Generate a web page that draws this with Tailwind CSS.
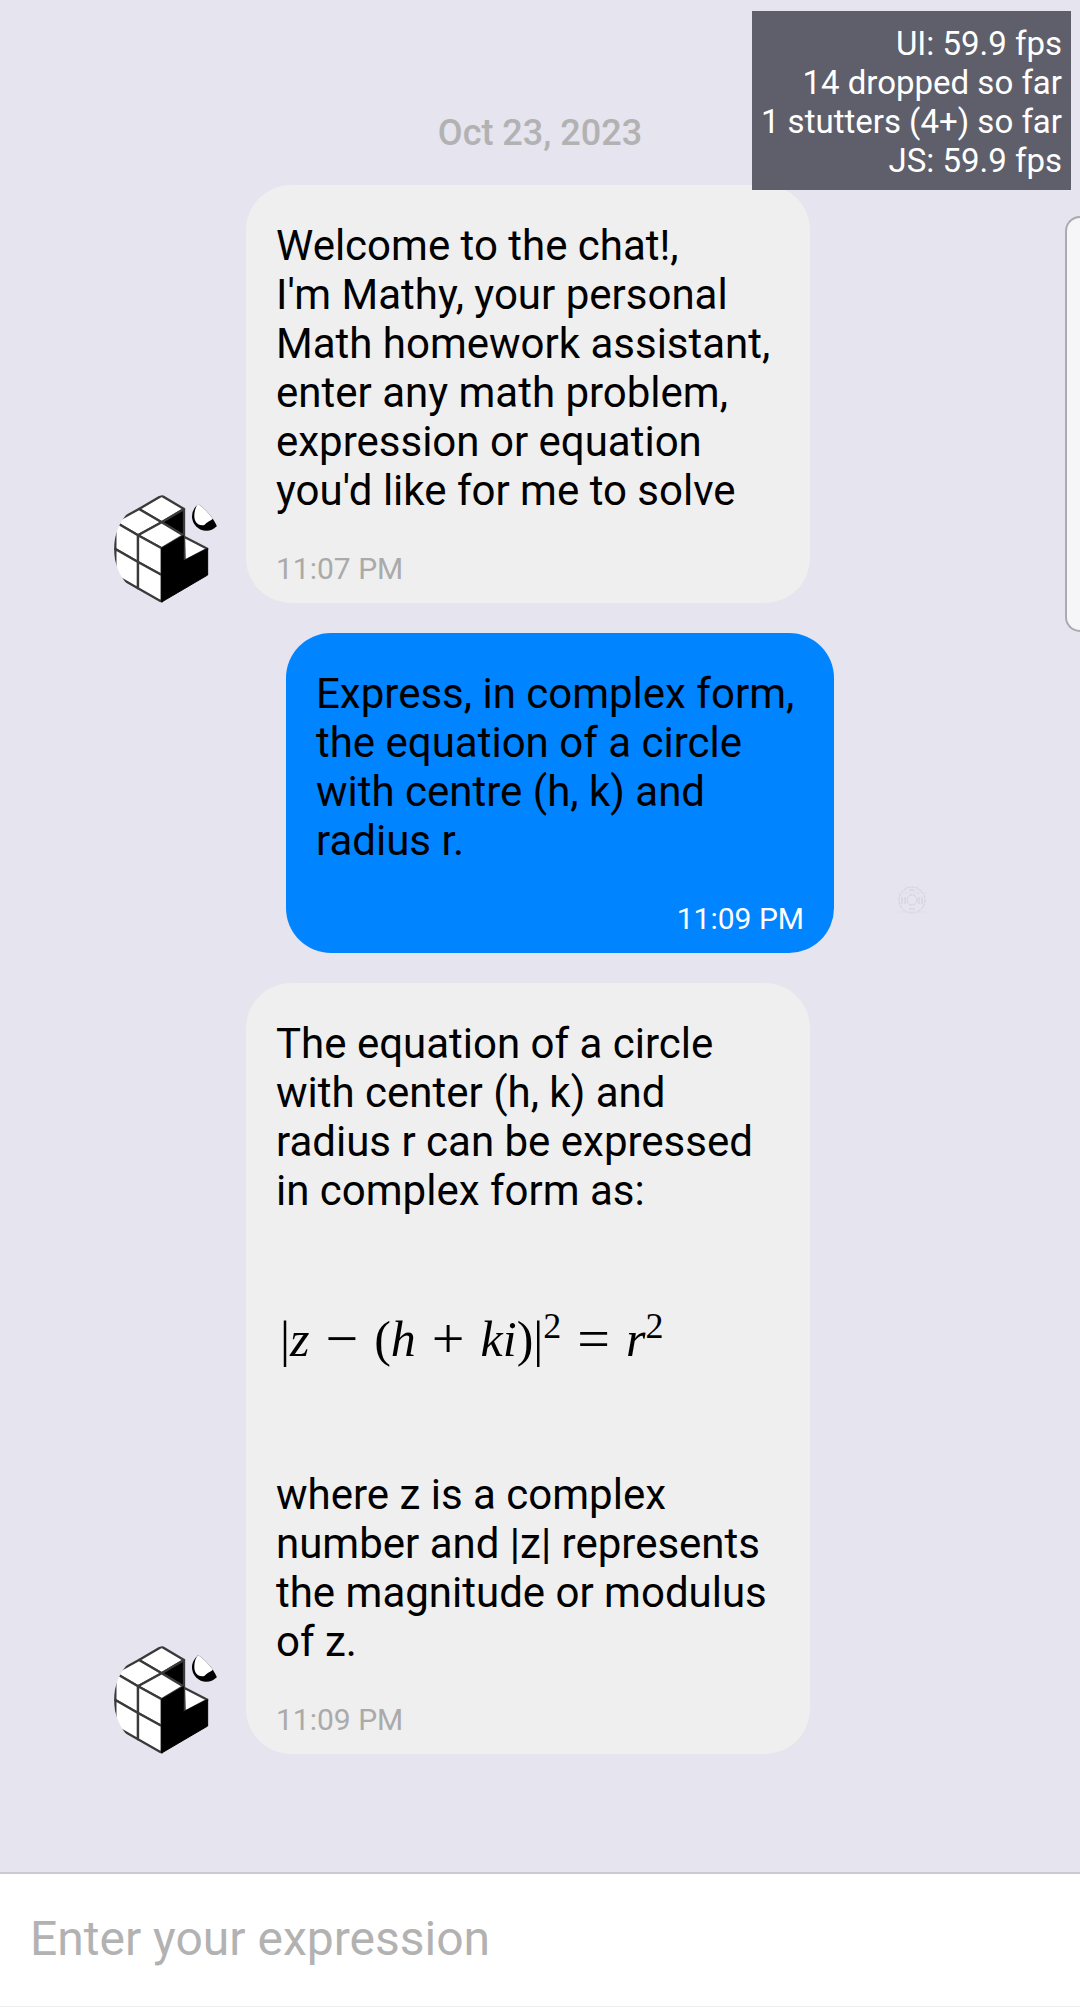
<!DOCTYPE html>
<html lang="en">
<head>
<meta charset="utf-8">
<meta name="viewport" content="width=device-width, initial-scale=1">
<title>Mathy chat</title>
<script src="https://cdn.jsdelivr.net/npm/@tailwindcss/browser@4"></script>
</head>
<body class="relative flex min-h-screen flex-col overflow-x-hidden bg-[#e5e4ef] font-['Roboto',sans-serif] text-black">

<svg class="absolute size-0" aria-hidden="true">
  <defs>
    <clipPath id="round"><circle cx="204" cy="207" r="162"/></clipPath>
    <symbol id="mathy" viewBox="42 45 324 324">
      <g clip-path="url(#round)" stroke="#3a3a3a" stroke-width="7" stroke-linejoin="round">
        <path fill="#fff" d="M185 47 252 87 185 127 117 87Z"/>
        <path fill="#fff" d="M117 87 185 127 114 166 46 126Z"/>
        <path fill="#000" d="M252 87V168L185 127Z"/>
        <path fill="#fff" d="M185 127 250 166 185 205 114 166Z"/>
        <path fill="#fff" d="M46 126 114 166V246L46 207Z"/>
        <path fill="#fff" d="M114 166 185 205V285L114 246Z"/>
        <path fill="#fff" d="M46 207 114 246V325L46 286Z"/>
        <path fill="#fff" d="M114 246 185 285V365L114 325Z"/>
        <path fill="#fff" d="M252 170 322 206 254 242Z"/>
        <path fill="#000" stroke="#000" stroke-width="3" d="M185 205 250 167V243L323 206V285L185 366Z"/>
        <circle cx="319" cy="109" r="43" fill="#000" stroke="none"/>
        <path fill="#fff" stroke="none" d="M283 105C284 82 294 70 306 64L362 90C350 118 330 118 313 135C292 139 282 124 283 105Z"/>
      </g>
    </symbol>
  </defs>
</svg>

<main class="flex flex-1 flex-col px-[114px] pt-28 pb-24">
  <h1 class="mb-[31px] text-center text-[36px]/[42px] font-medium text-[#b2b2b2]"><time datetime="2023-10-23">Oct 23, 2023</time></h1>

  <div class="flex flex-col gap-[30px]">
    <article class="flex items-end gap-6">
      <svg class="size-[108px] shrink-0" role="img" aria-label="Mathy"><use href="#mathy"/></svg>
      <div class="flex w-full max-w-[564px] flex-col gap-9 rounded-[45px] bg-[#efefef] px-[30px] pt-9 pb-[17px]">
        <p class="text-[42px]/[49px]">Welcome to the chat!,<br>I'm Mathy, your personal Math homework assistant, enter any math problem, expression or equation you'd like for me to solve</p>
        <time class="text-[30px]/[35px] text-[#aaaaaa]">11:07 PM</time>
      </div>
    </article>

    <article class="flex items-end justify-end gap-6">
      <div class="flex w-full max-w-[548px] flex-col gap-9 rounded-[45px] bg-[#0084ff] px-[30px] pt-9 pb-[17px]">
        <p class="text-[42px]/[49px]">Express, in complex form, the equation of a circle with centre (h, k) and radius r.</p>
        <time class="text-right text-[30px]/[35px] text-white">11:09 PM</time>
      </div>
      <svg class="size-[108px] shrink-0" viewBox="0 0 108 108" fill="none" stroke="#d0d0da" role="img" aria-label="You">
        <circle cx="54" cy="55" r="13" stroke-dasharray="3 1"/>
        <path d="M44 52V59M47 52V59M61 52V59M64 52V59M51 45H57M51 64H57"/>
        <circle cx="54" cy="55" r="5" stroke-dasharray="3 1"/>
        <path stroke="#dfdee9" d="M39 48H69M39 67H69M48 39V50M60 39V50"/>
      </svg>
    </article>

    <article class="flex items-end gap-6">
      <svg class="size-[108px] shrink-0" role="img" aria-label="Mathy"><use href="#mathy"/></svg>
      <div class="flex w-full max-w-[564px] flex-col gap-9 rounded-[45px] bg-[#efefef] px-[30px] pt-9 pb-[17px]">
        <div class="text-[42px]/[49px]">
          <p>The equation of a circle with center (h, k) and radius r can be expressed in complex form as:</p>
          <p class="flex h-[255px] items-center gap-4 pb-2 pl-1 font-['Liberation_Serif',serif] text-[50px]/[60px] whitespace-nowrap">
            <span>|<i>z</i></span><span class="text-[58px]/[60px]">−</span><span>(<i>h</i></span><span class="text-[58px]/[60px]">+</span><span><i>ki</i>)|<sup class="text-[36px]/[0px]">2</sup></span><span class="text-[58px]/[60px]">=</span><span><i>r</i><sup class="text-[36px]/[0px]">2</sup></span>
          </p>
          <p>where z is a complex number and |z| represents the magnitude or modulus of z.</p>
        </div>
        <time class="text-[30px]/[35px] text-[#aaaaaa]">11:09 PM</time>
      </div>
    </article>
  </div>
</main>

<footer class="border-t-2 border-b border-t-[#cbcad3] border-b-[#eeeeee] bg-white px-[30px]">
  <input type="text" aria-label="Expression" placeholder="Enter your expression" class="block h-[132px] w-full bg-transparent pb-1 text-[48px]/[56px] outline-none placeholder:text-[#b2b2b2]">
</footer>

<aside class="absolute top-[11px] right-[9px] bg-[#5f5f6b] px-[9px] pt-[13px] pb-[10px] text-right text-[33px]/[39px] whitespace-nowrap text-white">
  <p>UI: 59.9 fps</p>
  <p>14 dropped so far</p>
  <p>1 stutters (4+) so far</p>
  <p>JS: 59.9 fps</p>
</aside>

<div class="absolute top-[216px] right-0 h-[416px] w-[15px] rounded-l-[18px] border-2 border-r-0 border-[#aaaab0] bg-[#f6f6f9]"></div>
</body>
</html>
